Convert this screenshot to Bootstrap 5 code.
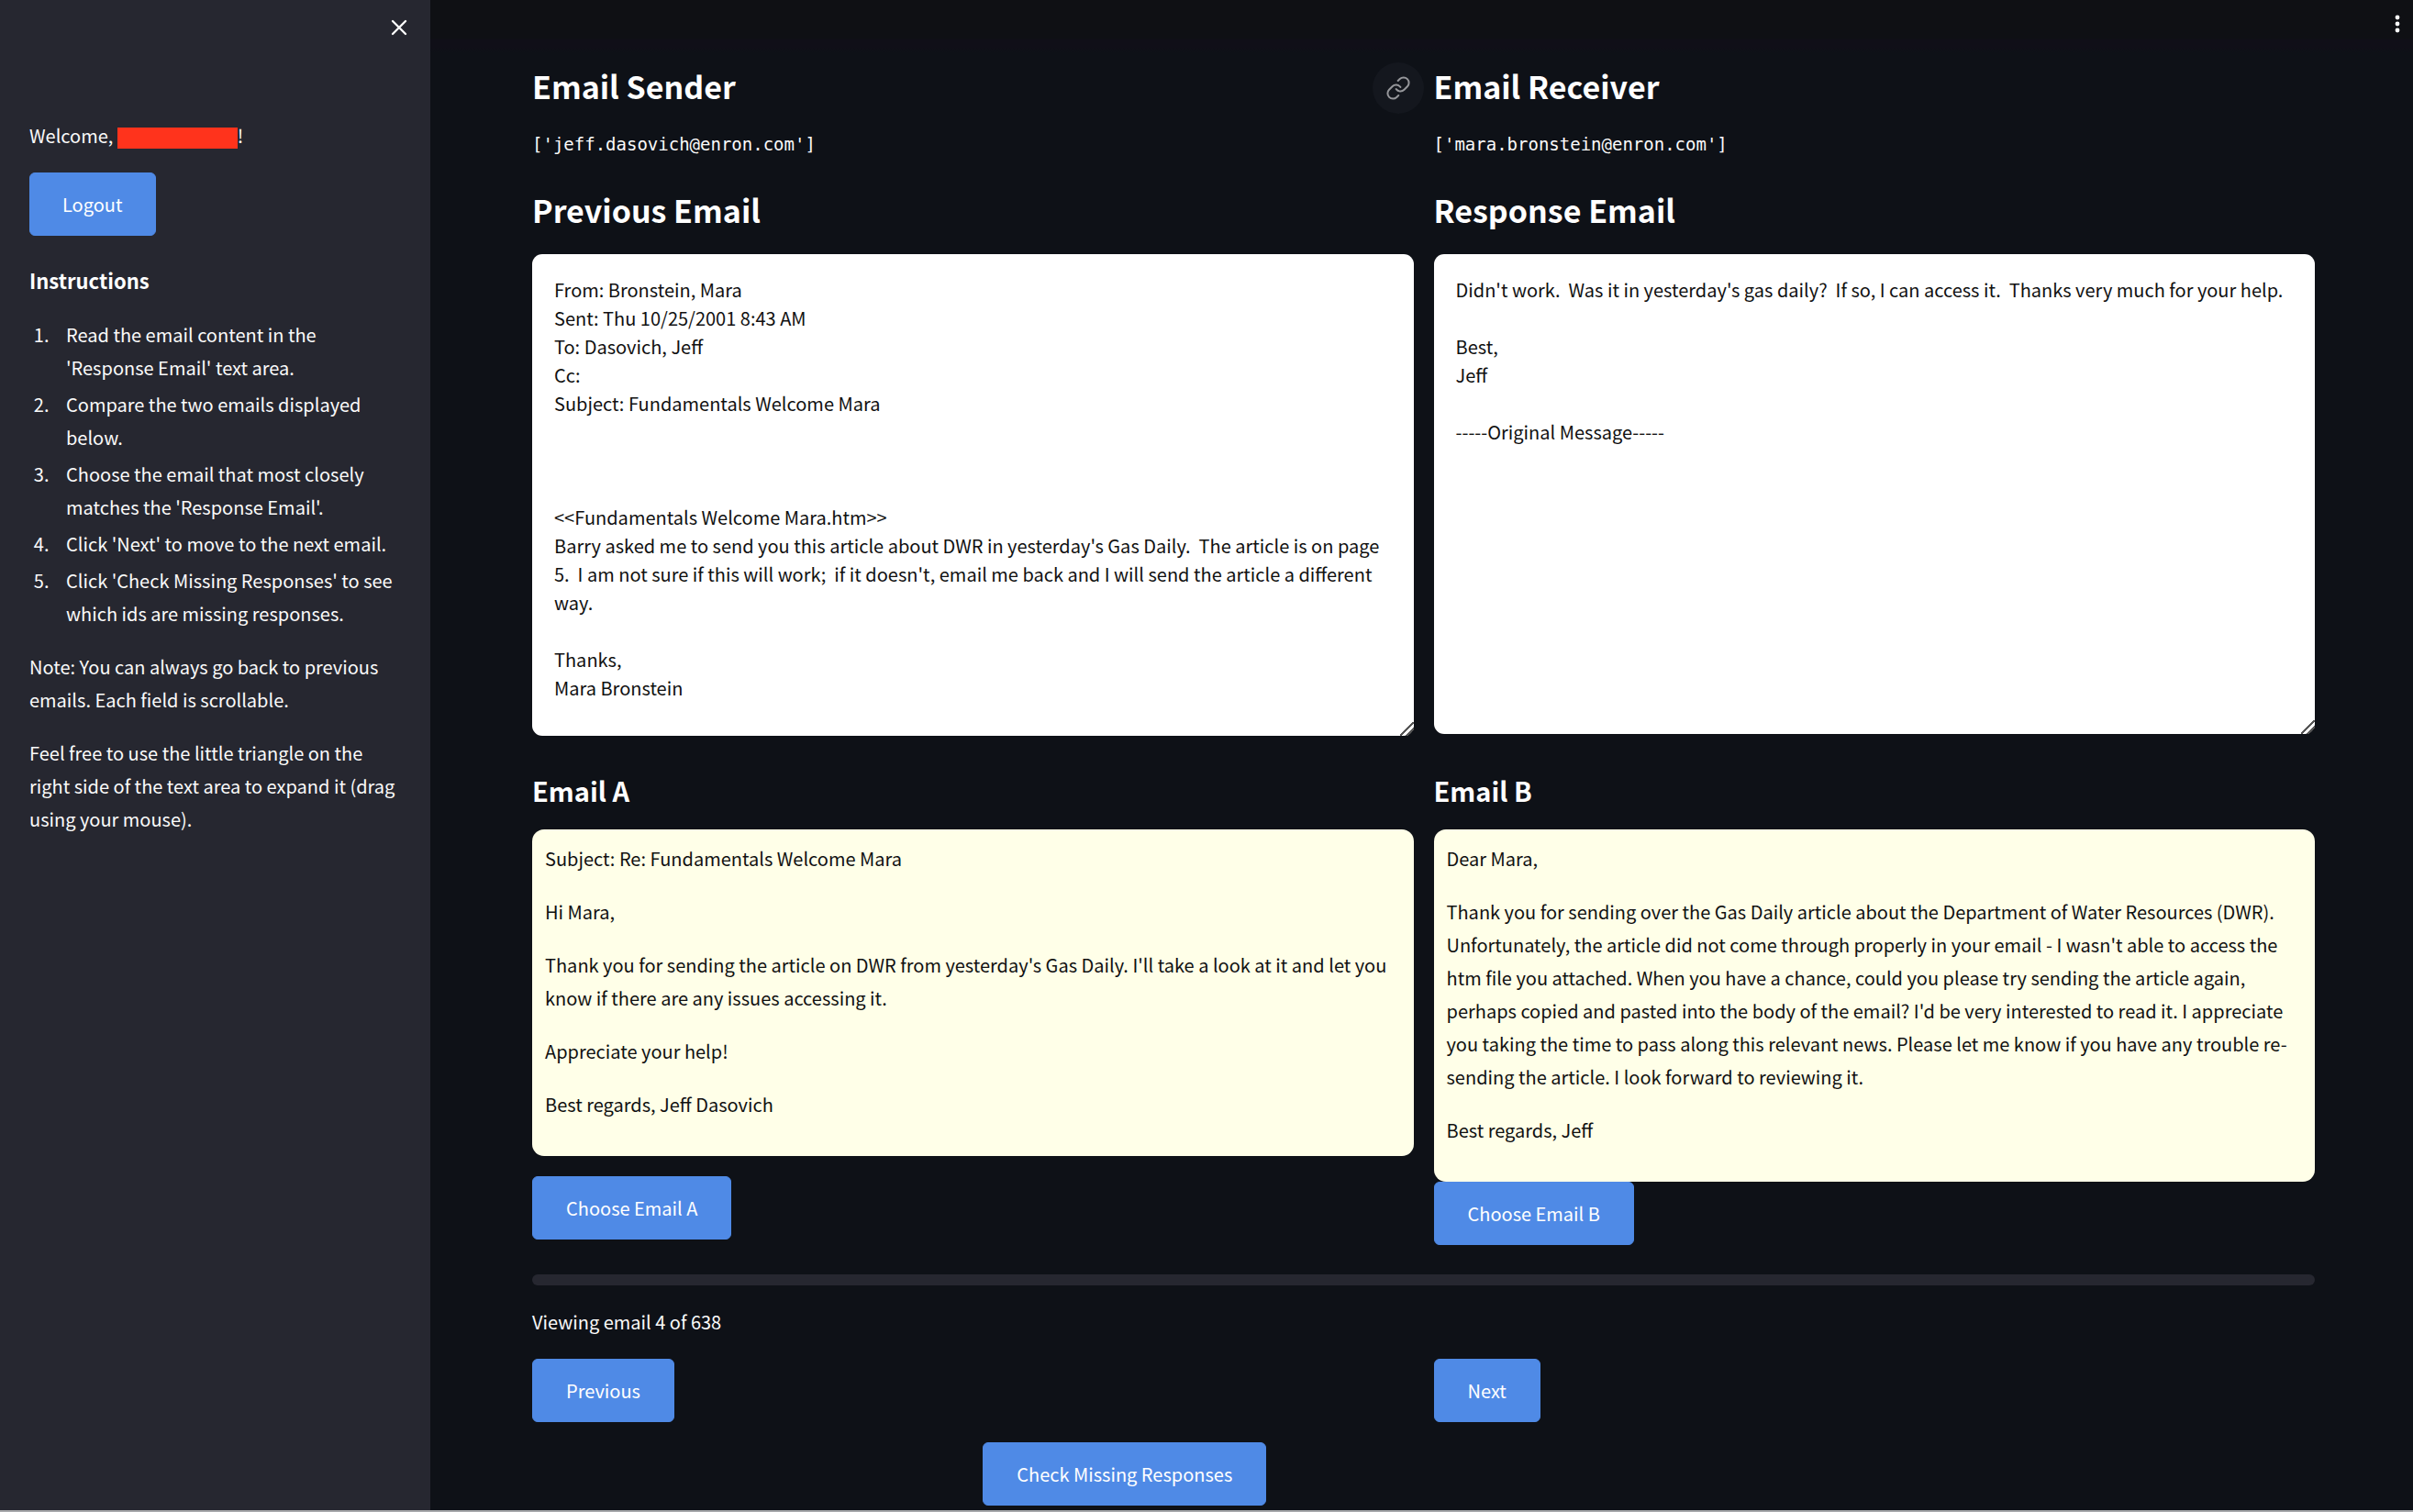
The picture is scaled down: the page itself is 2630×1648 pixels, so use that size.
<!DOCTYPE html>
<html lang="en" data-bs-theme="dark">
<head>
<meta charset="utf-8">
<meta name="viewport" content="width=device-width, initial-scale=1">
<title>Email comparison</title>
<link href="https://cdn.jsdelivr.net/npm/bootstrap@5.3.0/dist/css/bootstrap.min.css" rel="stylesheet">
<style>
  body {
    font-family: "Noto Sans CJK SC", "Noto Sans", sans-serif;
    font-size: 20px;
    line-height: 36px;
    color: #fafafa;
    background: #0e1117;
  }
  .app-shell { border-bottom: 2px solid #a8a9ac; }
  .app-side { flex: 0 0 469px; background: #262730; padding: 0 32px; }
  .side-top { height: 130px; padding-top: 14px; margin-right: -14px; }
  .icon-btn { background: none; border: 0; padding: 0; color: #fafafa; width: 32px; height: 32px; display: flex; align-items: center; justify-content: center; }
  .redacted { display: inline-block; width: 131px; height: 23px; background: #ff331c; vertical-align: -6px; }
  .app-side p { margin-bottom: 22px; }
  .side-title { font-size: 22px; line-height: 36px; font-weight: 700; margin: 30px 0 24px; }
  .side-list { padding-left: 26px; margin-bottom: 22px; }
  .side-list li { margin-bottom: 4px; padding-left: 14px; }
  .btn-app {
    --bs-btn-color: #fff; --bs-btn-bg: #4f8ae6; --bs-btn-border-color: #4f8ae6;
    --bs-btn-hover-color: #fff; --bs-btn-hover-bg: #3f7ad6; --bs-btn-hover-border-color: #3f7ad6;
    --bs-btn-padding-x: 35px; --bs-btn-padding-y: 15px;
    --bs-btn-font-size: 20px; --bs-btn-line-height: 37px; --bs-btn-border-radius: 6px;
  }
  .main-area .btn-app { --bs-btn-padding-x: 36px; }
  .app-top { height: 57px; padding: 10px 1px 0; background: linear-gradient(#0f1014 42px, #100f18 43px, #100f18 52px, #0e1117); }
  .app-content { padding: 14px 107px 5px 111px; }
  .pair { --bs-gutter-x: 22px; }
  .title-lg { font-size: 34px; line-height: 46px; font-weight: 700; margin: 0; }
  .title-md { font-size: 29px; line-height: 40px; font-weight: 700; margin: 0 0 23px; }
  .addr { font-family: "DejaVu Sans Mono", "Liberation Mono", monospace; font-size: 19px; line-height: 32px; margin: 24px 0 0; }
  .mails-row { margin-top: 33px; }
  .mails-row .title-lg { margin-bottom: 25px; }
  .choices-row { margin-top: 39px; }
  .link-anchor { position: absolute; right: 100%; top: -3px; width: 56px; height: 56px; margin-right: 11px; border-radius: 50%; background: #14171e; color: #96979b; display: flex; align-items: center; justify-content: center; }
  .mail-text, .mail-text:focus {
    background: #fff; color: #111; border: 0; border-radius: 11px; padding: 23px 24px 22px;
    font-size: 20px; line-height: 31px; resize: both; height: 523px; box-shadow: none; color-scheme: light;
  }
  .mail-tall, .mail-tall:focus { height: 525px; }
  .mail-text::-webkit-resizer { background: linear-gradient(135deg, transparent 46%, #555 46% 54%, transparent 54% 70%, #555 70% 78%, transparent 78%); }
  .mail-card { background: #ffffe8; color: #111; border-radius: 13px; padding: 14px 14px 38px; }
  .mail-card p { margin-bottom: 22px; }
  .mail-card p:last-child { margin-bottom: 0; }
  .choose-a { margin-top: 22px; }
  .bar-track { height: 12px; border-radius: 6px; background: #262730; --bs-progress-bar-bg: #4f8ae6; margin-top: 32px; }
  .view-note { margin: 22px 0; }
  .check-row { margin-top: 22px; }
</style>
<script src="https://cdn.jsdelivr.net/npm/bootstrap@5.3.0/dist/js/bootstrap.bundle.min.js"></script>
</head>
<body>
<div class="app-shell d-flex min-vh-100">
  <aside class="app-side">
    <div class="side-top d-flex justify-content-end align-items-start">
      <button class="icon-btn" type="button" aria-label="Close sidebar">
        <svg width="18" height="18" viewBox="0 0 18 18" fill="none" stroke="currentColor" stroke-width="2.4" stroke-linecap="round"><path d="M2 2l14 14M16 2L2 16"/></svg>
      </button>
    </div>
    <p>Welcome, <span class="redacted"></span>!</p>
    <button class="btn btn-app" type="button">Logout</button>
    <h3 class="side-title">Instructions</h3>
    <ol class="side-list">
      <li>Read the email content in the 'Response Email' text area.</li>
      <li>Compare the two emails displayed below.</li>
      <li>Choose the email that most closely matches the 'Response Email'.</li>
      <li>Click 'Next' to move to the next email.</li>
      <li>Click 'Check Missing Responses' to see which ids are missing responses.</li>
    </ol>
    <p>Note: You can always go back to previous emails. Each field is scrollable.</p>
    <p>Feel free to use the little triangle on the right side of the text area to expand it (drag using your mouse).</p>
  </aside>

  <main class="main-area flex-grow-1">
    <header class="app-top d-flex justify-content-end">
      <button class="icon-btn" type="button" aria-label="Menu">
        <svg width="6" height="22" viewBox="0 0 6 22" fill="currentColor"><circle cx="3" cy="4" r="2.4"/><circle cx="3" cy="11" r="2.4"/><circle cx="3" cy="18" r="2.4"/></svg>
      </button>
    </header>
    <div class="app-content">
      <div class="row pair">
        <div class="col-6">
          <h2 class="title-lg">Email Sender</h2>
          <p class="addr">['jeff.dasovich@enron.com']</p>
        </div>
        <div class="col-6">
          <h2 class="title-lg position-relative">
            <a class="link-anchor" href="#receiver" aria-label="Link to Email Receiver">
              <svg width="28" height="28" viewBox="0 0 24 24" fill="none" stroke="currentColor" stroke-width="1.7" stroke-linecap="round" stroke-linejoin="round"><path d="M10 13a5 5 0 0 0 7.54.54l3-3a5 5 0 0 0-7.07-7.07l-1.72 1.71"/><path d="M14 11a5 5 0 0 0-7.54-.54l-3 3a5 5 0 0 0 7.07 7.07l1.71-1.71"/></svg>
            </a><span id="receiver">Email Receiver</span></h2>
          <p class="addr">['mara.bronstein@enron.com']</p>
        </div>
      </div>

      <div class="row pair mails-row">
        <div class="col-6">
          <h2 class="title-lg"><label for="prev">Previous Email</label></h2>
          <textarea id="prev" class="form-control mail-text mail-tall" spellcheck="false">From: Bronstein, Mara
Sent: Thu 10/25/2001 8:43 AM
To: Dasovich, Jeff
Cc:
Subject: Fundamentals Welcome Mara



&lt;&lt;Fundamentals Welcome Mara.htm&gt;&gt;
Barry asked me to send you this article about DWR in yesterday's Gas Daily.  The article is on page 5.  I am not sure if this will work;  if it doesn't, email me back and I will send the article a different way.

Thanks,
Mara Bronstein</textarea>
        </div>
        <div class="col-6">
          <h2 class="title-lg"><label for="resp">Response Email</label></h2>
          <textarea id="resp" class="form-control mail-text" spellcheck="false">Didn't work.  Was it in yesterday's gas daily?  If so, I can access it.  Thanks very much for your help.

Best,
Jeff

-----Original Message-----</textarea>
        </div>
      </div>

      <div class="row pair choices-row">
        <div class="col-6">
          <h3 class="title-md">Email A</h3>
          <div class="mail-card">
            <p>Subject: Re: Fundamentals Welcome Mara</p>
            <p>Hi Mara,</p>
            <p>Thank you for sending the article on DWR from yesterday's Gas Daily. I'll take a look at it and let you know if there are any issues accessing it.</p>
            <p>Appreciate your help!</p>
            <p>Best regards, Jeff Dasovich</p>
          </div>
          <button class="btn btn-app choose-a" type="button">Choose Email A</button>
        </div>
        <div class="col-6">
          <h3 class="title-md">Email B</h3>
          <div class="mail-card">
            <p>Dear Mara,</p>
            <p>Thank you for sending over the Gas Daily article about the Department of Water Resources (DWR). Unfortunately, the article did not come through properly in your email - I wasn't able to access the htm file you attached. When you have a chance, could you please try sending the article again, perhaps copied and pasted into the body of the email? I'd be very interested to read it. I appreciate you taking the time to pass along this relevant news. Please let me know if you have any trouble re-sending the article. I look forward to reviewing it.</p>
            <p>Best regards, Jeff</p>
          </div>
          <button class="btn btn-app" type="button">Choose Email B</button>
        </div>
      </div>

      <div class="progress bar-track" role="progressbar" aria-label="Progress" aria-valuenow="0" aria-valuemin="0" aria-valuemax="638"><div class="progress-bar" style="width: 0%"></div></div>
      <p class="view-note">Viewing email 4 of 638</p>
      <div class="row pair">
        <div class="col-6"><button class="btn btn-app" type="button">Previous</button></div>
        <div class="col-6"><button class="btn btn-app" type="button">Next</button></div>
      </div>
      <div class="row pair check-row">
        <div class="col-3 offset-3"><button class="btn btn-app text-nowrap" type="button">Check Missing Responses</button></div>
      </div>
    </div>
  </main>
</div>
</body>
</html>
